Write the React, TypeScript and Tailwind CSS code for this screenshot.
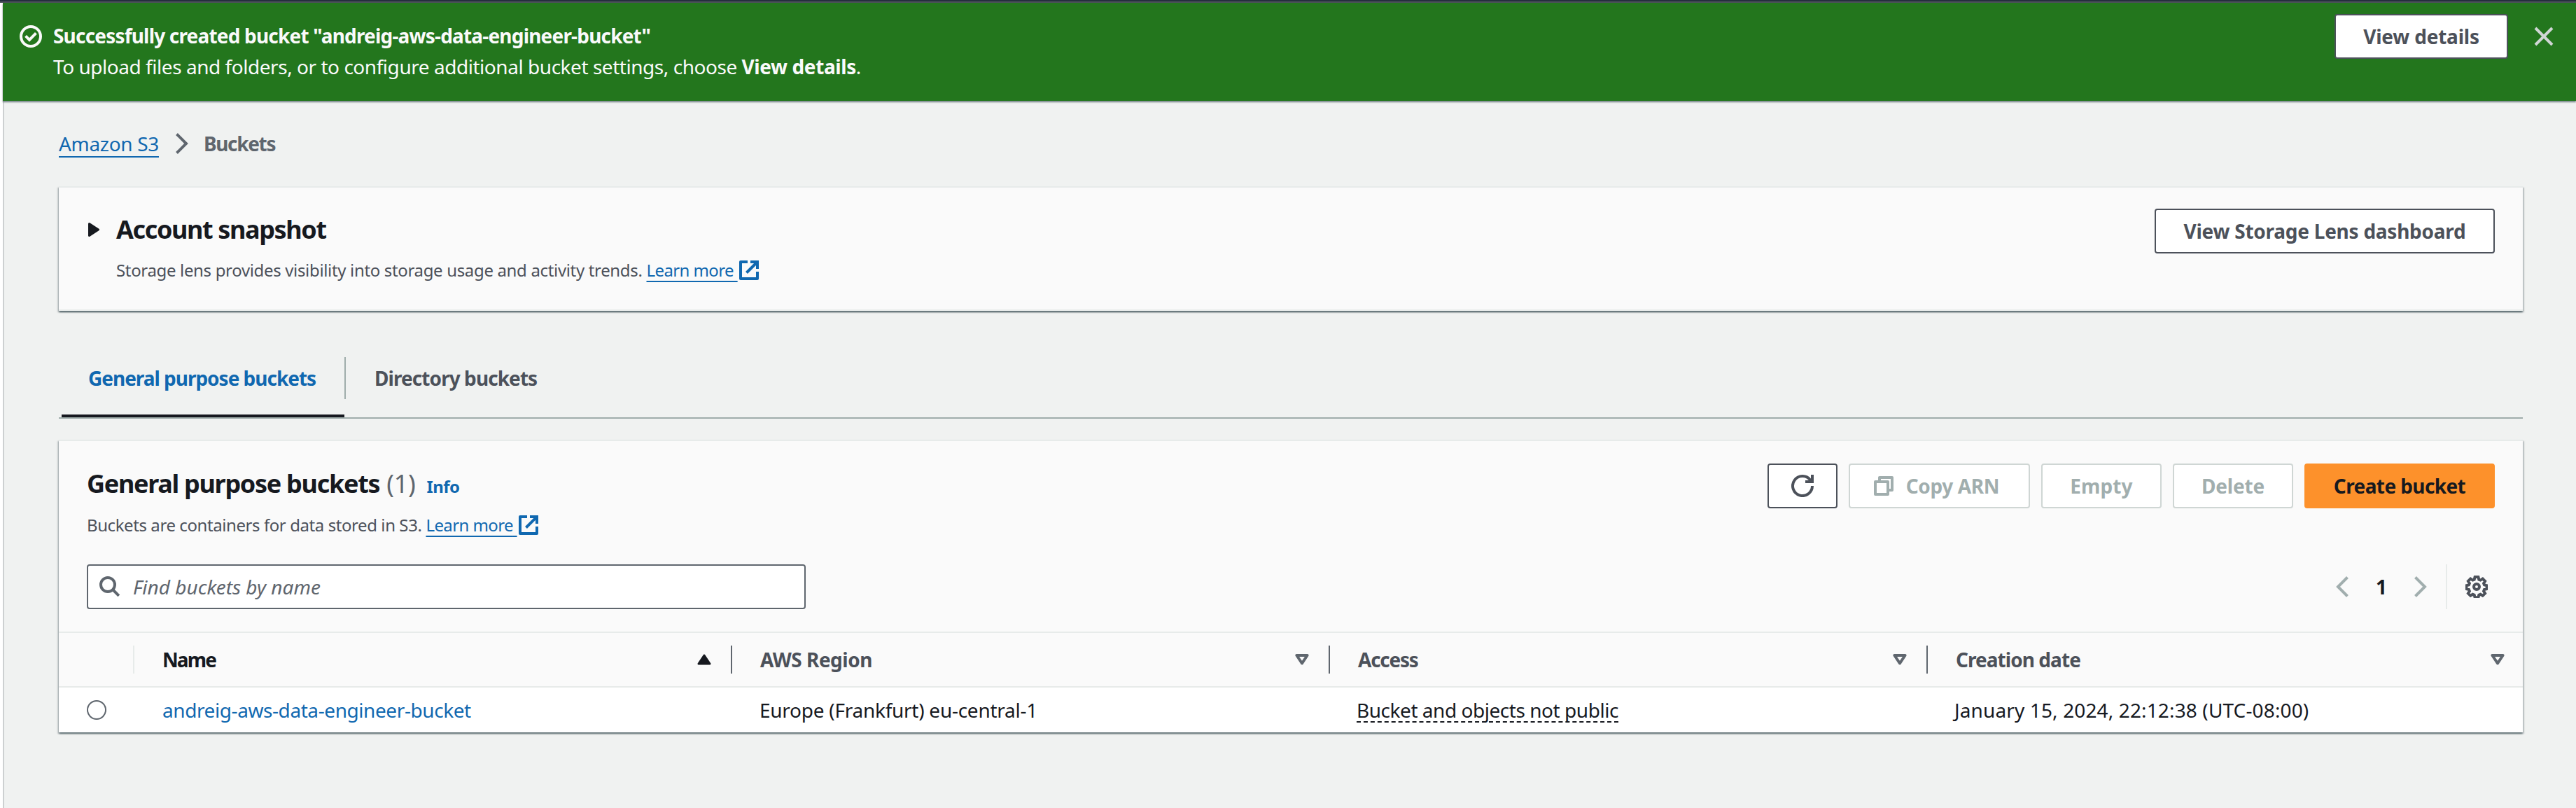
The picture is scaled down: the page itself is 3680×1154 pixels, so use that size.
import type { ReactNode } from "react";

const cardShadow =
  "shadow-[0_2px_2px_0_rgba(0,28,36,0.5),2px_2px_2px_0_rgba(0,28,36,0.15),-2px_2px_2px_0_rgba(0,28,36,0.15)]";

function Svg({ className, children }: { className: string; children: ReactNode }) {
  return (
    <svg viewBox="0 0 16 16" fill="none" stroke="currentColor" strokeWidth="2" className={`shrink-0 ${className}`}>
      {children}
    </svg>
  );
}

function ExternalIcon({ className = "" }: { className?: string }) {
  return (
    <svg viewBox="0 0 28 28" fill="none" stroke="currentColor" strokeWidth="4" className={`size-7 shrink-0 ${className}`}>
      <path d="M12 2H2V26H26V16" strokeLinejoin="round" />
      <path d="M16 2H26V12" />
      <path d="M26 2L10.5 17.5" />
    </svg>
  );
}

function Chevron({ left = false, className }: { left?: boolean; className: string }) {
  return (
    <svg viewBox="0 0 18 30" fill="none" stroke="currentColor" strokeWidth="4" className={`h-[30px] w-[18px] shrink-0 ${className}`}>
      <path d={left ? "M16.5 1.5L3 15L16.5 28.5" : "M1.5 1.5L15 15L1.5 28.5"} />
    </svg>
  );
}

function Button({ className, children }: { className: string; children: ReactNode }) {
  return (
    <button className={`flex h-16 shrink-0 items-center justify-center rounded-[4px] border-2 font-bold whitespace-nowrap ${className}`}>
      {children}
    </button>
  );
}

function SortDown() {
  return (
    <svg viewBox="0 0 20 16" fill="none" stroke="currentColor" strokeWidth="4" strokeLinejoin="round" className="h-4 w-5 shrink-0 text-[#5f666e]">
      <path d="M2.4 2H17.6L10 13.4Z" />
    </svg>
  );
}

const columns = [
  { label: "Name", spacing: "tracking-[-1.9px]", sorted: true },
  { label: "AWS Region", spacing: "tracking-[-0.5px]", sorted: false },
  { label: "Access", spacing: "tracking-[-1.25px]", sorted: false },
  { label: "Creation date", spacing: "tracking-[-0.95px]", sorted: false },
];

function Banner() {
  return (
    <div className="relative ml-1 flex h-[140px] shrink-0 bg-[#23761d] text-[#fafafa] shadow-[0_2px_2px_0_rgba(0,28,36,0.5)]">
      <Svg className="mt-8 ml-6 size-8">
        <circle cx="8" cy="8" r="7" />
        <path d="M4.3 7.7L7 10.4L11.7 5.7" />
      </Svg>
      <div className="mt-[25px] ml-4 grow leading-[44px] whitespace-nowrap">
        <div className="font-bold tracking-[-0.81px]">Successfully created bucket "andreig-aws-data-engineer-bucket"</div>
        <div className="tracking-[-0.46px]">
          To upload files and folders, or to configure additional bucket settings, choose{" "}
          <span className="font-bold tracking-[-0.4px]">View details</span>.
        </div>
      </div>
      <Button className="mt-4 w-[248px] border-[#4c515a] bg-white tracking-[-0.2px] text-[#4c515a]">View details</Button>
      <svg viewBox="0 0 28 28" stroke="#d0d6d5" strokeWidth="4" className="mt-[34px] mr-8 ml-[37px] size-7">
        <path d="M2 2L26 26M26 2L2 26" />
      </svg>
    </div>
  );
}

function Snapshot() {
  return (
    <section className={`mt-[39px] flex h-[178px] border-y-2 border-[#e7ebea] bg-[#fafafa] ${cardShadow}`}>
      <svg viewBox="0 0 16 20" className="mt-[50px] ml-[42px] h-5 w-4">
        <path d="M1.5 1.5L14.5 10L1.5 18.5Z" fill="#16191f" stroke="#16191f" strokeWidth="3" strokeLinejoin="round" />
      </svg>
      <div className="ml-6 grow">
        <h2 className="mt-[38px] text-[36px] leading-[44px] font-bold tracking-[-1.38px] text-[#16191f]">Account snapshot</h2>
        <p className="mt-4 flex text-[24px] leading-10 tracking-[-0.34px] text-[#4c515a]">
          Storage lens provides visibility into storage usage and activity trends.
          <a className="ml-[6px] tracking-[-0.6px] text-[#1068b0] underline decoration-2 underline-offset-[6px] [text-decoration-skip-ink:none]">
            Learn more{"\u00a0"}
          </a>
          <ExternalIcon className="mt-[6px] ml-[2px] text-[#1068b0]" />
        </p>
      </div>
      <Button className="mt-[30px] mr-10 w-[486px] border-[#4c515a] bg-white tracking-[-0.25px] text-[#4c515a]">
        View Storage Lens dashboard
      </Button>
    </section>
  );
}

function Tabs() {
  return (
    <nav className="mt-[66px] flex h-[88px] border-b-2 border-[#9fadab] font-bold">
      <div className="ml-1 flex w-[404px] border-b-4 border-[#16191f]">
        <div className="h-[60px] w-full pl-[38px] leading-[60px] tracking-[-1.02px] whitespace-nowrap text-[#1068b0]">
          General purpose buckets
        </div>
      </div>
      <div className="h-[60px] border-l-2 border-[#9fadab] pl-[41px] leading-[60px] tracking-[-0.93px] text-[#4c515a]">
        Directory buckets
      </div>
    </nav>
  );
}

function Gear() {
  const outline =
    "M13.6 2h4.8l.9 3.7 2.2.9 3.2-2 3.4 3.4-2 3.2.9 2.2 3.6.9v4.8l-3.6.9-.9 2.2 2 3.2-3.4 3.4-3.2-2-2.2.9-.9 3.6h-4.8l-.9-3.6-2.2-.9-3.2 2-3.4-3.4 2-3.2-.9-2.2-3.6-.9v-4.8l3.6-.9.9-2.2-2-3.2 3.4-3.4 3.2 2 2.2-.9z";
  return (
    <svg viewBox="0 0 32 32" fill="none" stroke="currentColor" strokeWidth="4" className="size-8 text-[#4c515a]">
      <path d={outline} />
      <circle cx="16" cy="16" r="4" />
    </svg>
  );
}

function Buckets() {
  return (
    <section className={`mt-[30px] border-t-2 border-[#e7ebea] bg-[#fafafa] ${cardShadow}`}>
      <div className="flex h-[272px] flex-col px-10">
        <div className="flex h-[140px]">
          <div className="grow">
            <h2 className="mt-9 flex h-[50px] items-baseline text-[36px] leading-[50px] font-bold tracking-[-1.3px] text-[#16191f]">
              General purpose buckets
              <span className="ml-[10px] font-normal tracking-[-0.3px] text-[#5f666e]">(1)</span>
              <a className="ml-[16px] text-[24px] tracking-[-0.6px] text-[#1068b0]">Info</a>
            </h2>
            <p className="mt-[14px] flex text-[24px] leading-10 tracking-[-0.42px] text-[#4c515a]">
              Buckets are containers for data stored in S3.
              <a className="ml-[6px] tracking-[-0.6px] text-[#1068b0] underline decoration-2 underline-offset-[6px] [text-decoration-skip-ink:none]">
                Learn more{"\u00a0"}
              </a>
              <ExternalIcon className="mt-[6px] ml-[2px] text-[#1068b0]" />
            </p>
          </div>
          <div className="mt-8 flex h-16 gap-4">
            <Button className="w-[100px] border-[#4c515a] bg-white text-[#4c515a]">
              <svg viewBox="0 0 32 32" fill="none" stroke="currentColor" strokeWidth="4" className="size-8">
                <path d="M30 16A14 14 0 1 1 27.2 7.6L29 10" />
                <path d="M30 0V10H20" />
              </svg>
            </Button>
            <Button className="w-[259px] border-[#cfd6d4] bg-white tracking-[-0.36px] text-[#a1aeae]">
              <svg viewBox="0 0 28 28" fill="none" stroke="currentColor" strokeWidth="4" strokeLinejoin="round" className="-ml-2 mr-[18px] size-7">
                <path d="M2 8H20V26H2Z" />
                <path d="M8 7V2H26V20H21" />
              </svg>
              Copy ARN
            </Button>
            <Button className="w-[172px] border-[#cfd6d4] bg-white tracking-[0.1px] text-[#a1aeae]">Empty</Button>
            <Button className="w-[172px] border-[#cfd6d4] bg-white tracking-[-0.15px] text-[#a1aeae]">Delete</Button>
            <Button className="w-[272px] border-[#fd912b] bg-[#fd912b] tracking-[-0.6px] text-[#16191f]">Create bucket</Button>
          </div>
        </div>
        <div className="mt-9 flex h-16 items-center">
          <div className="flex h-16 w-[1027px] items-center rounded-[4px] border-2 border-[#5f666e] bg-white pl-4 text-[#5f666e]">
            <svg viewBox="0 0 30 30" fill="none" stroke="currentColor" strokeWidth="4" className="size-[30px]">
              <circle cx="12" cy="12" r="10" />
              <path d="M19 19L27.8 27.8" />
            </svg>
            <span className="ml-[18px] italic">Find buckets by name</span>
          </div>
          <div className="ml-auto flex h-16 items-center">
            <Chevron left className="text-[#a1aeae]" />
            <span className="w-[94px] text-center font-bold text-[#16191f]">1</span>
            <Chevron className="text-[#a1aeae]" />
            <div className="ml-[27px] flex h-16 items-center border-l-2 border-[#e7ebea] pr-[10px] pl-[26px]">
              <Gear />
            </div>
          </div>
        </div>
      </div>
      <div className="grid h-20 grid-cols-[106px_854px_854px_854px_852px] items-center border-y-2 border-[#e7ebea] font-bold">
        <span />
        {columns.map((c) => (
          <div
            key={c.label}
            className={`flex h-10 items-center justify-between border-l-2 pl-10 ${
              c.sorted ? "border-[#e7ebea] text-[#16191f]" : "border-[#5f666e] text-[#4c515a]"
            } ${c.label === "Creation date" ? "pr-[26px]" : "pr-7"}`}
          >
            <span className={c.spacing}>{c.label}</span>
            {c.sorted ? (
              <svg viewBox="0 0 20 16" className="h-4 w-5">
                <path d="M10 2L18 14H2Z" fill="#16191f" stroke="#16191f" strokeWidth="3" strokeLinejoin="round" />
              </svg>
            ) : (
              <SortDown />
            )}
          </div>
        ))}
      </div>
      <div className="grid h-16 grid-cols-[148px_853px_853px_854px_812px] items-center bg-white text-[#16191f]">
        <span className="ml-10 size-7 rounded-full border-2 border-[#5f666e] bg-white" />
        <a className="tracking-[-0.42px] text-[#1068b0]">andreig-aws-data-engineer-bucket</a>
        <span className="tracking-[-0.26px]">Europe (Frankfurt) eu-central-1</span>
        <span className="flex">
          <span className="h-9 border-b-2 border-dashed border-[#16191f] leading-9 tracking-[-0.46px]">Bucket and objects not public</span>
        </span>
        <span className="tracking-[0.13px]">January 15, 2024, 22:12:38 (UTC-08:00)</span>
      </div>
    </section>
  );
}

export default function App() {
  return (
    <div className="flex h-[1154px] w-[3680px] flex-col overflow-hidden bg-white font-['Noto_Sans','Open_Sans',sans-serif] text-[28px] leading-[44px]">
      <div className="h-1 shrink-0 border-b-2 border-[#4c515a] bg-[#242f3d]" />
      <Banner />
      <main className="ml-1 grow border-l-2 border-[#cdd0d1] bg-[#f0f2f1] pr-[76px] pl-[78px]">
        <div className="mt-[39px] flex h-11 items-center">
          <a className="tracking-[-0.32px] text-[#1068b0] underline decoration-2 underline-offset-[7px]">Amazon S3</a>
          <Chevron className="ml-6 text-[#5f666e]" />
          <span className="ml-[22px] font-bold tracking-[-1.35px] text-[#5f666e]">Buckets</span>
        </div>
        <Snapshot />
        <Tabs />
        <Buckets />
      </main>
    </div>
  );
}
